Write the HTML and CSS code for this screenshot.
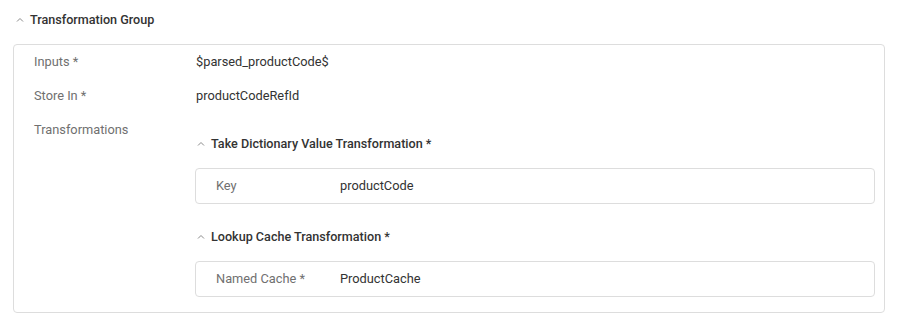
FILE: index.html
```html
<!DOCTYPE html>
<html lang="en">

<head>
    <meta charset="UTF-8">
    <title>Transformation Group</title>
    <link rel="stylesheet" href="styles.css">
</head>

<body>
    <div class="group">
        <div class="groupHeader">
            <svg class="chevron" width="8" height="5" viewBox="0 0 8 5"><polyline points="1,4.5 4,1.5 7,4.5" /></svg>
            <span>Transformation Group</span>
        </div>
        <div class="groupCard">
            <div class="row">
                <div class="label">Inputs *</div>
                <div class="value">$parsed_productCode$</div>
            </div>
            <div class="row">
                <div class="label">Store In *</div>
                <div class="value">productCodeRefId</div>
            </div>
            <div class="row">
                <div class="label">Transformations</div>
                <div class="subList">
                    <div class="subHeader">
                        <svg class="chevron" width="8" height="5" viewBox="0 0 8 5"><polyline points="1,4.5 4,1.5 7,4.5" /></svg>
                        <span>Take Dictionary Value Transformation *</span>
                    </div>
                    <div class="subCard">
                        <div class="subLabel">Key</div>
                        <div class="value">productCode</div>
                    </div>
                    <div class="subHeader second">
                        <svg class="chevron" width="8" height="5" viewBox="0 0 8 5"><polyline points="1,4.5 4,1.5 7,4.5" /></svg>
                        <span>Lookup Cache Transformation *</span>
                    </div>
                    <div class="subCard">
                        <div class="subLabel">Named Cache *</div>
                        <div class="value">ProductCache</div>
                    </div>
                </div>
            </div>
        </div>
    </div>
</body>

</html>
```

FILE: styles.css
```css
* {
    margin: 0;
    padding: 0;
    box-sizing: border-box;
}

body {
    font-family: Roboto, "Liberation Sans", sans-serif;
    font-size: 12.8px;
    color: #333333;
    background-color: #ffffff;
}

.chevron {
    fill: none;
    stroke: #8a8a8a;
    stroke-width: 1;
    flex: none;
}

.groupHeader {
    display: flex;
    align-items: center;
    gap: 6px;
    height: 38px;
    padding-left: 16px;
    font-size: 12.6px;
    font-weight: 500;
    color: #333333;
}

.groupCard {
    margin: 6px 14px 0 13px;
    border: 1px solid #dddddd;
    border-radius: 4px;
    padding: 0 9px 15px 20px;
}

.row {
    display: flex;
}

.label {
    width: 162px;
    flex: none;
    line-height: 34px;
    color: #707070;
}

.row > .value {
    line-height: 34px;
}

.subList {
    flex: 1;
    padding-top: 20px;
    margin-left: -1px;
}

.subHeader {
    display: flex;
    align-items: center;
    gap: 6px;
    height: 20px;
    padding-left: 2px;
    font-size: 12.6px;
    font-weight: 500;
    margin-bottom: 15px;
}

.subHeader.second {
    margin-top: 22px;
}

.subCard {
    display: flex;
    align-items: center;
    height: 36px;
    border: 1px solid #dddddd;
    border-radius: 4px;
    padding-left: 20px;
    padding-bottom: 1px;
}

.subLabel {
    width: 124px;
    flex: none;
    color: #707070;
}
```
